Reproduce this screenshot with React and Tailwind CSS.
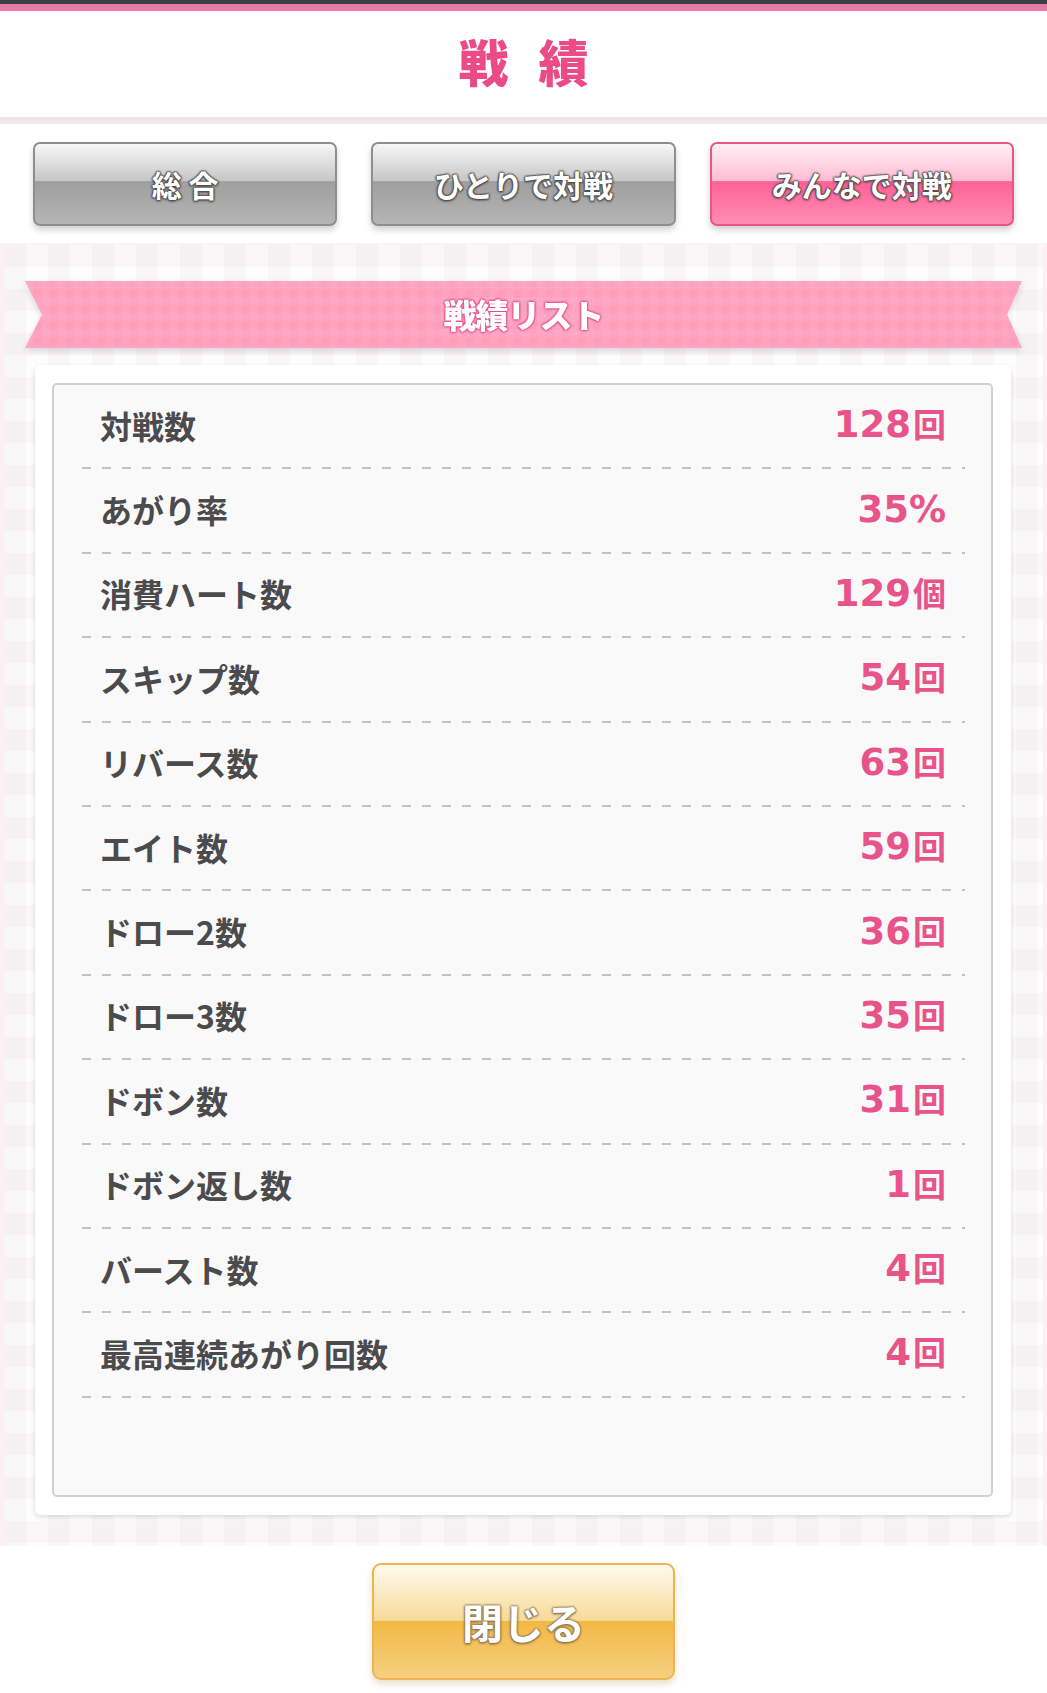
const STATS = [
  { label: "対戦数", num: "128", unit: "回" },
  { label: "あがり率", num: "35%", unit: "" },
  { label: "消費ハート数", num: "129", unit: "個" },
  { label: "スキップ数", num: "54", unit: "回" },
  { label: "リバース数", num: "63", unit: "回" },
  { label: "エイト数", num: "59", unit: "回" },
  { label: "ドロー2数", num: "36", unit: "回" },
  { label: "ドロー3数", num: "35", unit: "回" },
  { label: "ドボン数", num: "31", unit: "回" },
  { label: "ドボン返し数", num: "1", unit: "回" },
  { label: "バースト数", num: "4", unit: "回" },
  { label: "最高連続あがり回数", num: "4", unit: "回" },
];

const TABS = [
  { label: "総 合", active: false },
  { label: "ひとりで対戦", active: false },
  { label: "みんなで対戦", active: true },
];

function Tab({ label, active }) {
  return (
    <button
      className={
        active
          ? "h-[84px] rounded-[7px] border-2 border-[#e9558b] bg-[linear-gradient(#fff0f5,#ffbcd3_46%,#ff6196_47%,#ff8db4)] shadow-[0_4px_6px_rgba(0,0,0,0.18)] flex items-center justify-center"
          : "h-[84px] rounded-[7px] border-2 border-[#8e8e8e] bg-[linear-gradient(#f7f7f7,#c6c6c6_46%,#9f9f9f_47%,#b5b5b5)] shadow-[0_4px_6px_rgba(0,0,0,0.18)] flex items-center justify-center"
      }
    >
      <span className="text-[30px] font-bold text-white whitespace-pre [text-shadow:0_0_2px_#4a4a4a,0_0_2px_#4a4a4a,0_0_2px_#4a4a4a,0_0_2px_#4a4a4a,0_1px_3px_#444]">
        {label}
      </span>
    </button>
  );
}

function Row({ label, num, unit }) {
  return (
    <div className="h-[84.4px] ml-[28px] mr-[26px] flex flex-col">
      <div className="flex-1 flex items-center justify-between pl-[18px] pr-[19px] pb-[3px]">
        <span className="text-[32px] font-bold text-[#4b4b4d] leading-none">{label}</span>
        <span className="flex items-baseline text-[#e8538a] leading-none">
          <span className="text-[37px] font-bold font-['DejaVu_Sans',sans-serif]">{num}</span>
          {unit && <span className="text-[33px] font-bold ml-[2px]">{unit}</span>}
        </span>
      </div>
      <div className="h-[2px] bg-[linear-gradient(90deg,#c2c2c2_9px,transparent_9px)] bg-[length:20px_2px]" />
    </div>
  );
}

export default function App() {
  return (
    <div className="w-[1047px] h-[1693px] bg-white font-['Noto_Sans_CJK_JP',sans-serif] flex flex-col overflow-hidden">
      <div className="h-[4px] bg-[#3e4048]" />
      <div className="h-[7px] bg-[#e97aa5]" />
      <header className="h-[106px] flex items-center justify-center">
        <h1 className="text-[50px] font-black text-[#ec4c86] tracking-[30px] pl-[30px] leading-none pb-[8px]">戦績</h1>
      </header>
      <div className="h-[7px] bg-[#ede8e9]" />

      <div className="pt-[18px] pb-[17px] px-[33px] grid grid-cols-3 gap-[34px] border-b-2 border-[#fcf1f4]">
        {TABS.map((t) => (
          <Tab key={t.label} {...t} />
        ))}
      </div>

      <section className="h-[1301px] pt-[36px] border-x-4 border-[#fcf0f4] bg-[#fefdfd] bg-[linear-gradient(90deg,rgba(225,215,218,0.16)_50%,transparent_50%),linear-gradient(rgba(225,215,218,0.16)_50%,transparent_50%)] bg-[length:44px_44px] flex flex-col">
        <div className="mx-[21px] drop-shadow-[0_3px_3px_rgba(0,0,0,0.13)]">
          <div className="h-[67px] bg-[#ff9dbd] bg-[linear-gradient(90deg,rgba(255,255,255,0.06)_50%,transparent_50%),linear-gradient(rgba(255,255,255,0.06)_50%,transparent_50%)] bg-[length:16px_16px] [clip-path:polygon(0_0,100%_0,calc(100%-15px)_50%,100%_100%,0_100%,17px_50%)] flex items-center justify-center">
            <span className="text-[33px] font-black text-white leading-none tracking-[-1px] [text-shadow:0_0_2px_#e2508a,0_0_2px_#e2508a,0_0_2px_#e2508a,0_0_2px_#e2508a,0_0_3px_#e2508a]">
              戦績リスト
            </span>
          </div>
        </div>

        <div className="mt-[17px] ml-[31px] mr-[32px] h-[1150px] bg-white rounded-[6px] shadow-[0_2px_5px_rgba(0,0,0,0.14)] pt-[18px] pl-[17px] pr-[18px]">
          <div className="h-[1114px] bg-[#f9f9f9] border-2 border-[#d0d0d0] rounded-[5px]">
            {STATS.map((s) => (
              <Row key={s.label} {...s} />
            ))}
          </div>
        </div>
      </section>

      <div className="pt-[17px] flex justify-center">
        <button className="w-[303px] h-[117px] rounded-[9px] border-2 border-[#ecb553] bg-[linear-gradient(#fffaee,#f7da98_49%,#f2b945_50%,#f6cf80)] shadow-[0_4px_6px_rgba(180,130,40,0.25)] flex items-center justify-center">
          <span className="text-[41px] font-bold text-white leading-none [text-shadow:0_0_2px_#8a7655,0_0_2px_#8a7655,0_0_2px_#8a7655,0_1px_3px_#7a6648]">
            閉じる
          </span>
        </button>
      </div>
    </div>
  );
}
